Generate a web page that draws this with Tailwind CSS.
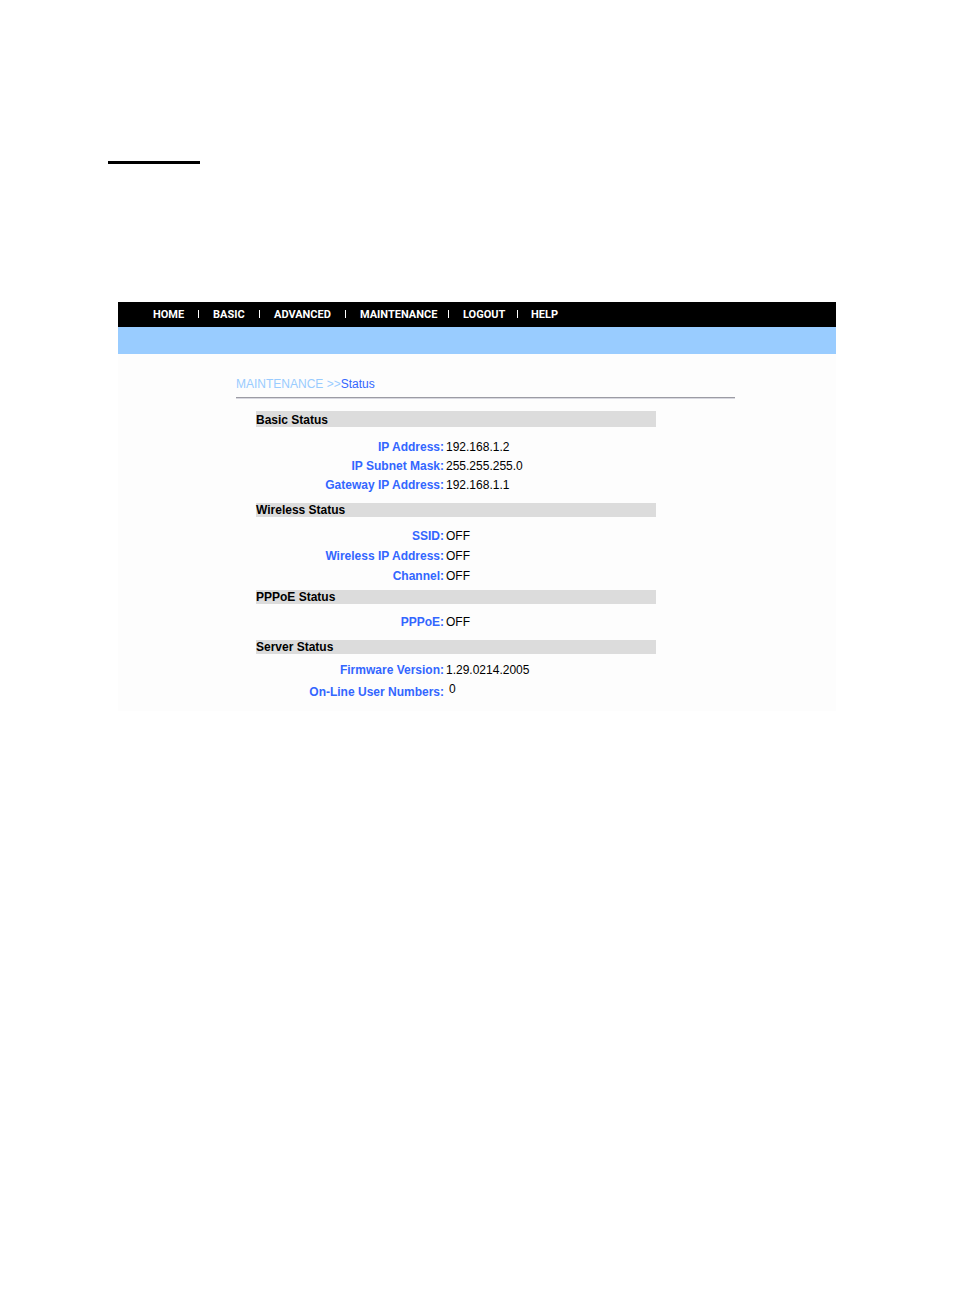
<!DOCTYPE html>
<html lang="en">
<head>
    <meta charset="UTF-8">
    <meta name="viewport" content="width=device-width, initial-scale=1.0">
    <title>Maintenance - Status</title>
    <script src="https://cdn.jsdelivr.net/npm/@tailwindcss/browser@4"></script>
</head>
<body class="min-h-screen bg-white text-black text-xs font-['Liberation_Sans',Arial,sans-serif]">

    <div class="max-w-[738px] mx-auto pt-[161px]">
        <hr class="w-[92px] border-0 h-[3px] bg-black">
    </div>

    <div class="max-w-[718px] mx-auto mt-[138px] bg-[#fdfdfd]">

        <!-- Top navigation -->
        <nav class="flex items-start h-[25px] pt-2 pl-[35px] bg-black text-white text-[11px] leading-[9px] font-bold font-['Roboto',sans-serif]">
            <a href="#" class="w-[45px]">HOME</a>
            <span class="w-px h-2 bg-white mr-[14px]"></span>
            <a href="#" class="w-[46px]">BASIC</a>
            <span class="w-px h-2 bg-white mr-[14px]"></span>
            <a href="#" class="w-[71px]">ADVANCED</a>
            <span class="w-px h-2 bg-white mr-[14px]"></span>
            <a href="#" class="w-[88px]">MAINTENANCE</a>
            <span class="w-px h-2 bg-white mr-[14px]"></span>
            <a href="#" class="w-[54px]">LOGOUT</a>
            <span class="w-px h-2 bg-white mr-[13px]"></span>
            <a href="#">HELP</a>
        </nav>
        <div class="h-[27px] bg-[#99ccff]"></div>

        <main class="max-w-[617px] pl-[118px] pt-[22px] pb-2">
            <p class="leading-4 text-[#3366ff]"><a href="#" class="text-[#99ccff]">MAINTENANCE &gt;&gt;</a>Status</p>
            <hr class="mt-[5px] border-0 h-[2px] bg-[#9c9ca4] border-b border-[#d8d8e0]">

            <div class="max-w-[420px] pl-5 pt-3">

                <!-- Basic status -->
                <h2 class="h-4 leading-[18px] mb-[11px] bg-[#dcdcdc] font-bold">Basic Status</h2>
                <dl class="grid grid-cols-[188px_1fr] gap-x-[2px] leading-[19px] mb-2">
                    <dt class="text-right font-bold text-[#3366ff]">IP Address:</dt>
                    <dd>192.168.1.2</dd>
                    <dt class="text-right font-bold text-[#3366ff]">IP Subnet Mask:</dt>
                    <dd>255.255.255.0</dd>
                    <dt class="text-right font-bold text-[#3366ff]">Gateway IP Address:</dt>
                    <dd>192.168.1.1</dd>
                </dl>

                <!-- Wireless status -->
                <h2 class="h-[14px] leading-[14px] mb-[9px] bg-[#dcdcdc] font-bold">Wireless Status</h2>
                <dl class="grid grid-cols-[188px_1fr] gap-x-[2px] leading-5 mb-1">
                    <dt class="text-right font-bold text-[#3366ff]">SSID:</dt>
                    <dd>OFF</dd>
                    <dt class="text-right font-bold text-[#3366ff]">Wireless IP Address:</dt>
                    <dd>OFF</dd>
                    <dt class="text-right font-bold text-[#3366ff]">Channel:</dt>
                    <dd>OFF</dd>
                </dl>

                <!-- PPPoE status -->
                <h2 class="h-[14px] leading-[14px] mb-2 bg-[#dcdcdc] font-bold">PPPoE Status</h2>
                <dl class="grid grid-cols-[188px_1fr] gap-x-[2px] leading-5 mb-2">
                    <dt class="text-right font-bold text-[#3366ff]">PPPoE:</dt>
                    <dd>OFF</dd>
                </dl>

                <!-- Server status -->
                <h2 class="h-[14px] leading-[14px] mb-[5px] bg-[#dcdcdc] font-bold">Server Status</h2>
                <dl class="grid grid-cols-[188px_1fr] gap-x-[2px] leading-[22px]">
                    <dt class="text-right font-bold text-[#3366ff]">Firmware Version:</dt>
                    <dd>1.29.0214.2005</dd>
                    <dt class="text-right font-bold text-[#3366ff]">On-Line User Numbers:</dt>
                    <dd class="pl-[3px] leading-4">0</dd>
                </dl>
            </div>
        </main>
    </div>

</body>
</html>
